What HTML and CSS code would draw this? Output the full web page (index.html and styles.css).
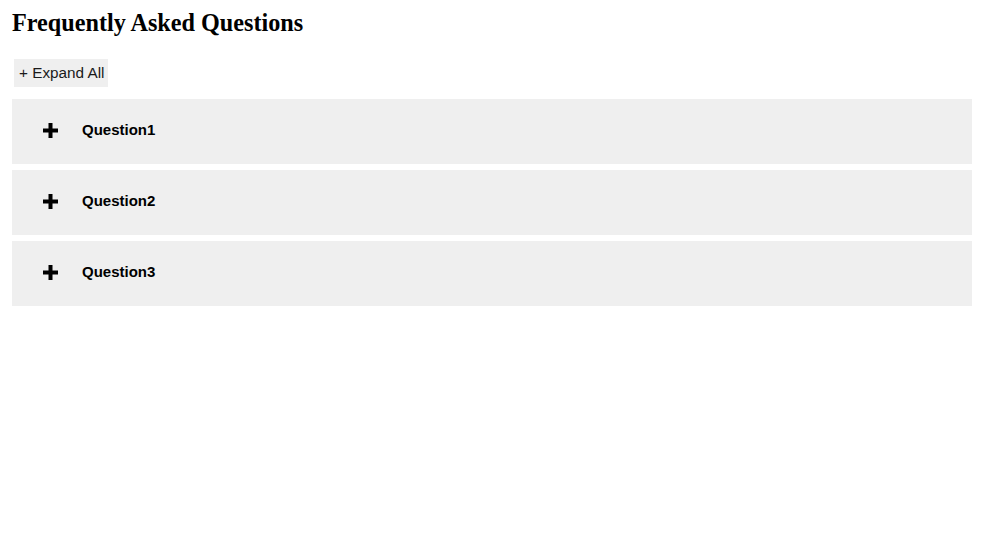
FILE: index.html
```html
<!DOCTYPE html>
<html>
<head>
<meta charset="utf-8">
<link rel="stylesheet" href="styles.css">
</head>
<body>
<div class="page">
  <h2 class="title">Frequently Asked Questions</h2>
  <button class="expand">+ Expand All</button>
  <div class="faq">
    <div class="item">
      <svg class="plus" width="15" height="15" viewBox="0 0 15 15"><path d="M5.5 0h4v5.5h5.5v4h-5.5v5.5h-4v-5.5h-5.5v-4h5.5z" fill="#000"/></svg>
      <span class="q">Question1</span>
    </div>
    <div class="item">
      <svg class="plus" width="15" height="15" viewBox="0 0 15 15"><path d="M5.5 0h4v5.5h5.5v4h-5.5v5.5h-4v-5.5h-5.5v-4h5.5z" fill="#000"/></svg>
      <span class="q">Question2</span>
    </div>
    <div class="item">
      <svg class="plus" width="15" height="15" viewBox="0 0 15 15"><path d="M5.5 0h4v5.5h5.5v4h-5.5v5.5h-4v-5.5h-5.5v-4h5.5z" fill="#000"/></svg>
      <span class="q">Question3</span>
    </div>
  </div>
</div>
</body>
</html>
```
FILE: styles.css
```css
html, body { margin: 0; padding: 0; background: #fff; }
.page { padding: 8px 12px; width: 960px; }
.title {
  font-family: "Liberation Serif", "Times New Roman", serif;
  font-size: 24.2px;
  font-weight: bold;
  margin: 0;
  line-height: 30px;
  color: #000;
}
.expand {
  display: block;
  margin: 21px 0 12px 2px;
  height: 28px;
  padding: 0 4px 0 5px;
  border: none;
  background: #efefef;
  font-family: "Liberation Sans", Arial, sans-serif;
  font-weight: normal;
  font-size: 15.3px;
  color: #1a1a1a;
}
.faq { display: flex; flex-direction: column; gap: 6px; }
.item {
  background: #efefef;
  height: 65px;
  display: flex;
  align-items: center;
  padding-left: 31px;
}
.plus { margin-right: 24px; margin-top: -2px; }
.q {
  font-family: "Liberation Sans", Arial, sans-serif;
  font-weight: bold;
  font-size: 15px;
  color: #000;
  margin-top: -4px;
}
```
